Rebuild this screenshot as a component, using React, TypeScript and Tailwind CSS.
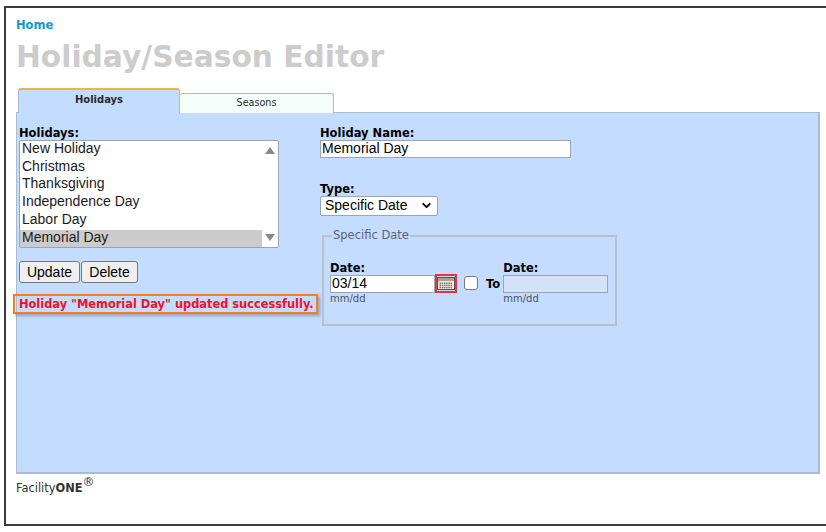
import { ChevronDown } from 'lucide-react';

const holidays = ['New Holiday', 'Christmas', 'Thanksgiving', 'Independence Day', 'Labor Day', 'Memorial Day'];

const verdana = "font-['DejaVu_Sans',sans-serif]";
const arial = "font-['Liberation_Sans',sans-serif]";

function CalendarIcon() {
  return (
    <svg width="18" height="13" viewBox="0 0 18 13">
      <rect x="0.5" y="0.5" width="17" height="12" fill="#f2efe2" stroke="#555" />
      <rect x="1" y="1" width="16" height="3" fill="#a8a484" />
      {[0, 1, 2].map(r =>
        [0, 1, 2, 3, 4, 5].map(c => (
          <rect
            key={`${r}-${c}`}
            x={2.5 + c * 2.2}
            y={5.5 + r * 2.2}
            width="1.5"
            height="1.4"
            fill={c === 5 ? '#d8404a' : '#6a6a6a'}
          />
        ))
      )}
    </svg>
  );
}

export default function App() {
  return (
    <div className="h-[532px] w-[826px] overflow-hidden bg-white pt-[6px] pb-[6px] pl-1">
      <div className="flex h-[520px] flex-col border-t-2 border-b-2 border-l-2 border-[#3c3c3c] pl-[10px]">
        <a className={`${verdana} mt-[10px] text-[11.5px] leading-[14px] font-bold text-[#1199cc]`}>Home</a>
        <h1 className={`${verdana} mt-[7px] text-[29.7px] leading-[36px] font-bold text-[#cccccc]`}>Holiday/Season Editor</h1>

        {/* Tabs */}
        <div className="relative z-10 mt-[13px] -mb-px ml-[2px] flex items-end">
          <div className={`${verdana} h-[25px] w-[162px] rounded-t-[3px] border-t-2 border-r border-l border-t-[#f5b041] border-r-[#a9bccf] border-l-[#a9bccf] bg-[#c4dcff] pt-[3px] text-center text-[10px] leading-[14px] font-bold text-[#2a2a2a]`}>
            Holidays
          </div>
          <div className={`${verdana} h-[20px] w-[154px] rounded-t-[3px] border-t border-r border-[#a9bccf] bg-[#f5fff9] pt-[1px] text-center text-[9.6px] leading-[16px] text-[#2a2a2a]`}>
            Seasons
          </div>
        </div>

        {/* Panel */}
        <div className="flex h-[362px] w-[804px] gap-[41px] border border-r-2 border-b-2 border-[#a9bccf] bg-[#c4dcff] pt-[13px] pl-[2px]">
          <div className="flex w-[260px] flex-col">
            <label className={`${verdana} text-[11.5px] leading-[14px] font-bold text-black`}>Holidays:</label>
            <div className="flex h-[108px] w-[260px] rounded-[2px] border border-[#9aa5b1] bg-white">
              <ul className={`${arial} w-[242px] text-[14px] leading-[15.7px] text-[#1a1a1a]`}>
                {holidays.map(h => (
                  <li key={h} className={h === 'Memorial Day' ? 'bg-[#cccccc] pb-[2px] pl-[2px]' : 'pb-[2px] pl-[2px]'}>
                    {h}
                  </li>
                ))}
              </ul>
              <div className="flex flex-1 flex-col items-center justify-between py-[6px]">
                <div className="h-0 w-0 border-r-[5px] border-b-[7px] border-l-[5px] border-r-transparent border-b-[#8a8a8a] border-l-transparent" />
                <div className="h-0 w-0 border-t-[7px] border-r-[5px] border-l-[5px] border-t-[#8a8a8a] border-r-transparent border-l-transparent" />
              </div>
            </div>
            <div className={`${arial} mt-[13px] flex gap-[1px] text-[14px] text-black`}>
              <button className="h-[22px] w-[61px] rounded-[3px] border border-[#7a7a7a] bg-[#efefef]">Update</button>
              <button className="h-[22px] w-[57px] rounded-[3px] border border-[#7a7a7a] bg-[#efefef]">Delete</button>
            </div>
            <div className={`${verdana} mt-[11px] -ml-[6px] w-[305px] border-2 border-[#f57c1f] pl-[4px] text-[11.4px] leading-[16px] font-bold whitespace-nowrap text-[#f0102a] shadow-[2px_2px_3px_rgba(90,90,90,0.45)]`}>
              Holiday "Memorial Day" updated successfully.
            </div>
          </div>

          <div className="flex flex-col">
            <label className={`${verdana} text-[11.5px] leading-[14px] font-bold text-black`}>Holiday Name:</label>
            <input
              readOnly
              value="Memorial Day"
              className={`${arial} h-[18px] w-[251px] border border-[#9aa5b1] bg-white pb-[2px] pl-[1px] text-[14px] text-black`}
            />
            <label className={`${verdana} mt-[25px] text-[11.5px] leading-[13px] font-bold text-black`}>Type:</label>
            <div className={`${arial} flex h-[20px] w-[118px] items-center justify-between rounded-[2px] border border-[#9aa5b1] bg-white px-[4px] pb-[2px] text-[14px] text-black`}>
              Specific Date
              <ChevronDown size={13} strokeWidth={3.5} />
            </div>

            <fieldset className={`${verdana} mt-[13px] ml-[2px] h-[97px] w-[295px] border-2 border-[#b8c0c8] pl-[6px]`}>
              <legend className="ml-[2px] px-[1px] text-[11.5px] leading-[13px] text-[#5a6470]">Specific Date</legend>
              <div className="mt-[20px] flex items-start">
                <div className="flex flex-col">
                  <span className="text-[11.5px] leading-[13px] font-bold text-black">Date:</span>
                  <input
                    readOnly
                    value="03/14"
                    className={`${arial} h-[18px] w-[105px] border border-[#9aa5b1] bg-white pb-[2px] pl-[1px] text-[14px] text-black`}
                  />
                  <span className="text-[10px] leading-[11px] text-[#4a5560]">mm/dd</span>
                </div>
                <div className="mt-[12px] flex h-[19px] w-[22px] items-center justify-center border-2 border-[#e8323c]">
                  <CalendarIcon />
                </div>
                <div className="mt-[14px] ml-[7px] h-[14px] w-[14px] rounded-[3px] border border-[#7a7a7a] bg-white" />
                <span className="mt-[15px] ml-[8px] text-[11.5px] leading-[14px] font-bold text-black">To</span>
                <div className="ml-[3px] flex flex-col">
                  <span className="text-[11.5px] leading-[13px] font-bold text-black">Date:</span>
                  <div className="h-[18px] w-[105px] border border-[#9aa5b1] bg-[#d2e2fa]" />
                  <span className="text-[10px] leading-[11px] text-[#4a5560]">mm/dd</span>
                </div>
              </div>
            </fieldset>
          </div>
        </div>

        <div className={`${verdana} mt-[7px] text-[11.4px] leading-[14px] text-[#333]`}>
          Facility<span className="font-bold">ONE</span>
          <sup className="text-[12px]">®</sup>
        </div>
      </div>
    </div>
  );
}
